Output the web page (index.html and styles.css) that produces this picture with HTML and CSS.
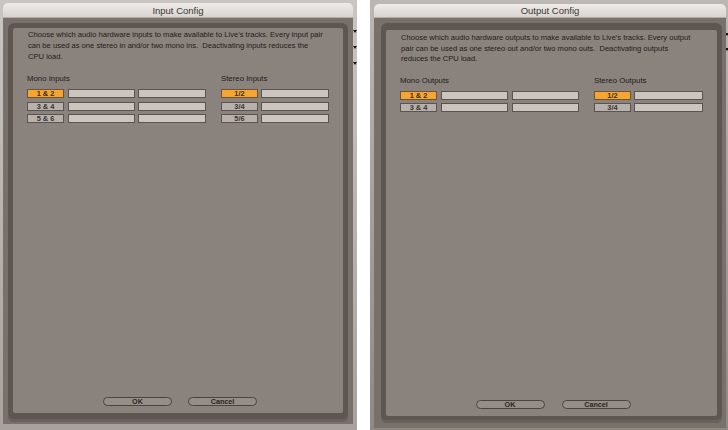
FILE: index.html
```html
<!DOCTYPE html>
<html>
<head>
<meta charset="utf-8">
<link rel="stylesheet" href="styles.css">
</head>
<body>
<div class="shot shot-left">
  <div class="window win-in">
    <div class="titlebar">Input Config</div>
    <div class="body">
      <div class="frame">
        <div class="content">
          <p class="desc">Choose which audio hardware inputs to make available to Live's tracks. Every input pair<br>can be used as one stereo in and/or two mono ins.&nbsp; Deactivating inputs reduces the<br>CPU load.</p>
          <div class="groups">
            <div class="group mono">
              <div class="glabel">Mono Inputs</div>
              <div class="row"><span class="box num on">1 &amp; 2</span><span class="box wide"></span><span class="box wide"></span></div>
              <div class="row"><span class="box num">3 &amp; 4</span><span class="box wide"></span><span class="box wide"></span></div>
              <div class="row"><span class="box num">5 &amp; 6</span><span class="box wide"></span><span class="box wide"></span></div>
            </div>
            <div class="group stereo">
              <div class="glabel">Stereo Inputs</div>
              <div class="row"><span class="box num on">1/2</span><span class="box wide"></span></div>
              <div class="row"><span class="box num">3/4</span><span class="box wide"></span></div>
              <div class="row"><span class="box num">5/6</span><span class="box wide"></span></div>
            </div>
          </div>
          <div class="buttons">
            <span class="btn">OK</span>
            <span class="btn">Cancel</span>
          </div>
        </div>
      </div>
    </div>
  </div>
  <div class="edge edge-r"><i class="tri"></i><i class="tri"></i><i class="tri"></i></div>
</div>
<div class="shot shot-right">
  <div class="window win-out">
    <div class="titlebar">Output Config</div>
    <div class="body">
      <div class="frame">
        <div class="content">
          <p class="desc">Choose which audio hardware outputs to make available to Live's tracks. Every output<br>pair can be used as one stereo out and/or two mono outs.&nbsp; Deactivating outputs<br>reduces the CPU load.</p>
          <div class="groups">
            <div class="group mono">
              <div class="glabel">Mono Outputs</div>
              <div class="row"><span class="box num on">1 &amp; 2</span><span class="box wide"></span><span class="box wide"></span></div>
              <div class="row"><span class="box num">3 &amp; 4</span><span class="box wide"></span><span class="box wide"></span></div>
            </div>
            <div class="group stereo">
              <div class="glabel">Stereo Outputs</div>
              <div class="row"><span class="box num on">1/2</span><span class="box wide"></span></div>
              <div class="row"><span class="box num">3/4</span><span class="box wide"></span></div>
            </div>
          </div>
          <div class="buttons">
            <span class="btn">OK</span>
            <span class="btn">Cancel</span>
          </div>
        </div>
      </div>
    </div>
  </div>
  <div class="edge edge-r2"><i class="tri"></i><i class="tri"></i></div>
</div>
</body>
</html>
```
FILE: styles.css
```css
* { box-sizing: border-box; }
html, body { margin: 0; padding: 0; }
body {
  width: 728px;
  height: 430px;
  background: #ffffff;
  display: flex;
  gap: 13px;
  overflow: hidden;
  font-family: "Liberation Sans", Arial, sans-serif;
  color: #2a2522;
}
.shot {
  height: 430px;
  display: flex;
  align-items: flex-start;
}
.shot-left {
  width: 357px;
  padding: 3px 0 0 3px;
  background: linear-gradient(#c9c5c2, #a8a29e);
}
.shot-right {
  width: 358px;
  padding: 4px 0 0 4px;
  background: linear-gradient(#bcb7b3, #8f8984);
}
.edge {
  display: flex;
  flex-direction: column;
  align-items: center;
  padding-top: 27px;
  gap: 13px;
  overflow: hidden;
}
.edge-r { width: 4px; }
.edge-r2 { width: 2px; padding-top: 29px; gap: 12px; }
.tri {
  display: block;
  width: 0;
  height: 0;
  border-left: 2px solid transparent;
  border-right: 2px solid transparent;
  border-top: 3px solid #151210;
  flex: none;
}
.window {
  display: flex;
  flex-direction: column;
  border-radius: 5px 5px 0 0;
  overflow: hidden;
  flex: none;
}
.win-in { width: 350px; height: 421px; }
.win-out { width: 352px; height: 424px; }
.titlebar {
  height: 15px;
  flex: none;
  background: linear-gradient(#eeebe8, #d8d4d0);
  border-bottom: 1px solid #b3aeaa;
  text-align: center;
  font-size: 9.5px;
  line-height: 15px;
  color: #3b3735;
}
.win-out .titlebar { height: 14px; line-height: 14px; }
.body {
  flex: 1;
  display: flex;
  background: #77706b;
  padding: 5px 5px 2px 5px;
}
.win-out .body { padding: 5px 4px 5px 7px; }
.frame {
  flex: 1;
  display: flex;
  background: #5d5652;
  border-radius: 6px;
  padding: 5px 5px 9px 5px;
  box-shadow: inset 0 -3px 0 #68615d;
}
.win-out .frame { padding: 7px 5px 7px 5px; }
.content {
  flex: 1;
  display: flex;
  flex-direction: column;
  background: #8a827d;
  border-radius: 2px;
  padding: 0 0 7px 14px;
}
.desc {
  margin: 0;
  padding: 1px 0 0 1px;
  font-size: 7.6px;
  line-height: 11px;
  color: #221d1a;
  white-space: nowrap;
}
.win-out .desc { padding-top: 3px; line-height: 10.5px; }
.groups {
  display: flex;
  gap: 15px;
  margin-top: 12px;
}
.group {
  display: flex;
  flex-direction: column;
}
.glabel {
  font-size: 7.8px;
  line-height: 9px;
  height: 9px;
  margin-bottom: 6px;
  color: #221d1a;
}
.row {
  display: flex;
  gap: 4px;
  height: 9px;
  margin-bottom: 3.5px;
}
.box {
  display: block;
  height: 9px;
  border: 1px solid #5a5350;
  background: #cbc4bf;
  font-size: 7.4px;
  font-weight: bold;
  line-height: 7px;
  text-align: center;
  color: #3a3431;
  white-space: nowrap;
}
.box.num { width: 37px; background: #b7b0ab; }
.box.on { background: #f7a532; border-color: #6e5430; color: #3a2c1a; }
.mono .box.wide { width: 67px; }
.mono .box.wide:last-child { width: 68px; margin-left: -1px; }
.stereo .row { gap: 3px; }
.stereo .box.num { width: 37px; }
.stereo .box.wide { width: 68px; }
.win-out .mono .box.wide:last-child { width: 67px; margin-left: 0; }
.win-out .stereo .box.wide { width: 69px; }
.win-out .groups { margin-top: 11px; }
.win-out .row { margin-bottom: 3px; }
.buttons {
  margin-top: auto;
  display: flex;
  justify-content: center;
  gap: 16px;
  padding-right: 10px;
}
.win-out .buttons { gap: 17px; padding-right: 11px; }
.btn {
  width: 69px;
  height: 9px;
  border: 1px solid #4b4541;
  border-radius: 5px;
  background: #958d88;
  font-size: 7.2px;
  font-weight: bold;
  line-height: 7px;
  text-align: center;
  color: #2a2522;
}
```
